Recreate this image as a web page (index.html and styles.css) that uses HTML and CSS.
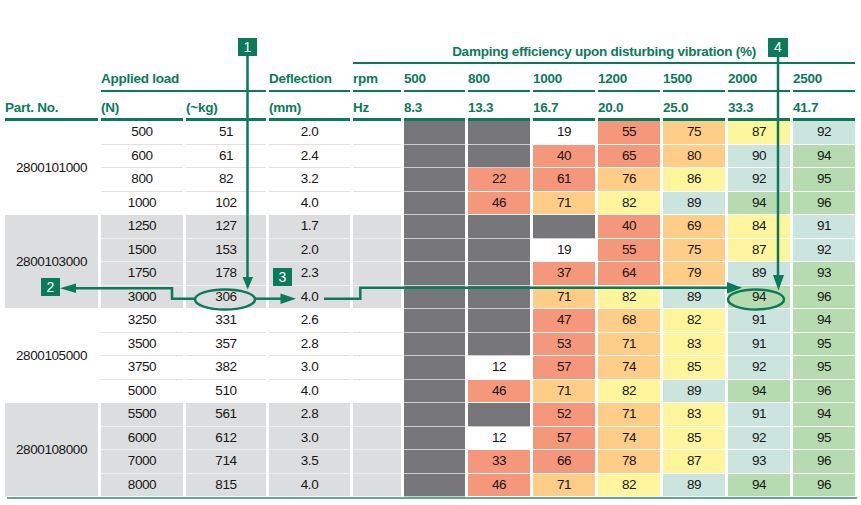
FILE: index.html
```html
<!DOCTYPE html>
<html lang="en">
<head>
<meta charset="utf-8">
<title>Damping efficiency</title>
<link rel="stylesheet" href="styles.css">
</head>
<body>
<div class="page">
  <table class="grid">
    <colgroup>
      <col class="c-part"><col class="c-n"><col class="c-kg"><col class="c-mm"><col class="c-rpm"><col class="c-500">
      <col class="c-f"><col class="c-f"><col class="c-f"><col class="c-f"><col class="c-f"><col class="c-f">
    </colgroup>
    <thead>
      <tr class="h1">
        <th colspan="4"></th>
        <th colspan="8" class="title">Damping efficiency upon disturbing vibration (%)</th>
      </tr>
      <tr class="h2">
        <th class="blank"></th>
        <th colspan="2" class="ul">Applied load</th>
        <th class="ul">Deflection</th>
        <th class="ul">rpm</th>
        <th class="ul">500</th>
        <th class="ul">800</th>
        <th class="ul">1000</th>
        <th class="ul">1200</th>
        <th class="ul">1500</th>
        <th class="ul">2000</th>
        <th class="ul">2500</th>
      </tr>
      <tr class="h3">
        <th>Part. No.</th>
        <th>(N)</th>
        <th>(~kg)</th>
        <th>(mm)</th>
        <th>Hz</th>
        <th>8.3</th>
        <th>13.3</th>
        <th>16.7</th>
        <th>20.0</th>
        <th>25.0</th>
        <th>33.3</th>
        <th>41.7</th>
      </tr>
    </thead>
    <tbody class="gw">
      <tr><td rowspan="4" class="l part">2800101000</td><td class="l">500</td><td class="l">51</td><td class="l">2.0</td><td class="l"></td><td class="d"></td><td class="d"></td><td class="w">19</td><td class="s">55</td><td class="p">75</td><td class="y">87</td><td class="t">92</td></tr>
      <tr><td class="l">600</td><td class="l">61</td><td class="l">2.4</td><td class="l"></td><td class="d"></td><td class="d"></td><td class="s">40</td><td class="s">65</td><td class="p">80</td><td class="t">90</td><td class="g">94</td></tr>
      <tr><td class="l">800</td><td class="l">82</td><td class="l">3.2</td><td class="l"></td><td class="d"></td><td class="s">22</td><td class="s">61</td><td class="p">76</td><td class="y">86</td><td class="t">92</td><td class="g">95</td></tr>
      <tr><td class="l">1000</td><td class="l">102</td><td class="l">4.0</td><td class="l"></td><td class="d"></td><td class="s">46</td><td class="p">71</td><td class="y">82</td><td class="t">89</td><td class="g">94</td><td class="g">96</td></tr>
    </tbody>
    <tbody class="gg">
      <tr><td rowspan="4" class="l part">2800103000</td><td class="l">1250</td><td class="l">127</td><td class="l">1.7</td><td class="l"></td><td class="d"></td><td class="d"></td><td class="d"></td><td class="s">40</td><td class="p">69</td><td class="y">84</td><td class="t">91</td></tr>
      <tr><td class="l">1500</td><td class="l">153</td><td class="l">2.0</td><td class="l"></td><td class="d"></td><td class="d"></td><td class="w">19</td><td class="s">55</td><td class="p">75</td><td class="y">87</td><td class="t">92</td></tr>
      <tr><td class="l">1750</td><td class="l">178</td><td class="l">2.3</td><td class="l"></td><td class="d"></td><td class="d"></td><td class="s">37</td><td class="s">64</td><td class="p">79</td><td class="t">89</td><td class="g">93</td></tr>
      <tr><td class="l">3000</td><td class="l">306</td><td class="l">4.0</td><td class="l"></td><td class="d"></td><td class="d"></td><td class="p">71</td><td class="y">82</td><td class="t">89</td><td class="g">94</td><td class="g">96</td></tr>
    </tbody>
    <tbody class="gw">
      <tr><td rowspan="4" class="l part">2800105000</td><td class="l">3250</td><td class="l">331</td><td class="l">2.6</td><td class="l"></td><td class="d"></td><td class="d"></td><td class="s">47</td><td class="p">68</td><td class="y">82</td><td class="t">91</td><td class="g">94</td></tr>
      <tr><td class="l">3500</td><td class="l">357</td><td class="l">2.8</td><td class="l"></td><td class="d"></td><td class="d"></td><td class="s">53</td><td class="p">71</td><td class="y">83</td><td class="t">91</td><td class="g">95</td></tr>
      <tr><td class="l">3750</td><td class="l">382</td><td class="l">3.0</td><td class="l"></td><td class="d"></td><td class="w">12</td><td class="s">57</td><td class="p">74</td><td class="y">85</td><td class="t">92</td><td class="g">95</td></tr>
      <tr><td class="l">5000</td><td class="l">510</td><td class="l">4.0</td><td class="l"></td><td class="d"></td><td class="s">46</td><td class="p">71</td><td class="y">82</td><td class="t">89</td><td class="g">94</td><td class="g">96</td></tr>
    </tbody>
    <tbody class="gg">
      <tr><td rowspan="4" class="l part">2800108000</td><td class="l">5500</td><td class="l">561</td><td class="l">2.8</td><td class="l"></td><td class="d"></td><td class="d"></td><td class="s">52</td><td class="p">71</td><td class="y">83</td><td class="t">91</td><td class="g">94</td></tr>
      <tr><td class="l">6000</td><td class="l">612</td><td class="l">3.0</td><td class="l"></td><td class="d"></td><td class="w">12</td><td class="s">57</td><td class="p">74</td><td class="y">85</td><td class="t">92</td><td class="g">95</td></tr>
      <tr><td class="l">7000</td><td class="l">714</td><td class="l">3.5</td><td class="l"></td><td class="d"></td><td class="s">33</td><td class="s">66</td><td class="p">78</td><td class="y">87</td><td class="t">93</td><td class="g">96</td></tr>
      <tr><td class="l">8000</td><td class="l">815</td><td class="l">4.0</td><td class="l"></td><td class="d"></td><td class="s">46</td><td class="p">71</td><td class="y">82</td><td class="t">89</td><td class="g">94</td><td class="g">96</td></tr>
    </tbody>
  </table>
  <div class="baseline"></div>

  <svg class="overlay" width="861" height="505" viewBox="0 0 861 505" aria-hidden="true">
    <g fill="none" stroke="#0a7a5b" stroke-width="2.5">
      <path d="M247.5 56 V279"/>
      <ellipse cx="225" cy="299.5" rx="30" ry="10"/>
      <path d="M195 298.7 H172 V288.2 H74"/>
      <path d="M255 298.7 H283"/>
      <path d="M324 298.7 H360.3 V287.8 H729"/>
      <ellipse cx="756" cy="299.5" rx="28" ry="10"/>
      <path d="M778 57 V277"/>
    </g>
    <g fill="#0a7a5b">
      <polygon points="242.5,277 253,277 247.7,289.5"/>
      <polygon points="60,288.2 76,283.5 76,293"/>
      <polygon points="296,298.7 280.5,293.5 280.5,304"/>
      <polygon points="742,287.8 727,282 727,293.5"/>
      <polygon points="773,275 784,275 778.5,290.5"/>
    </g>
  </svg>
  <div class="badge b1">1</div>
  <div class="badge b2">2</div>
  <div class="badge b3">3</div>
  <div class="badge b4">4</div>
</div>
</body>
</html>
```

FILE: styles.css
```css
* { box-sizing: border-box; }

html, body {
  margin: 0;
  padding: 0;
  background: #ffffff;
}

body {
  font-family: "Liberation Sans", Arial, sans-serif;
  color: #161616;
}

.page {
  position: relative;
  width: 861px;
  height: 505px;
  padding: 36px 0 0 2px;
  overflow: hidden;
}

.grid {
  border-collapse: separate;
  border-spacing: 3px 0;
  table-layout: fixed;
  width: 856px;
}

.c-part { width: 93px; }
.c-n { width: 82px; }
.c-kg { width: 80px; }
.c-mm { width: 81px; }
.c-rpm { width: 48px; }
.c-500 { width: 61px; }
.c-f { width: 62px; }

th {
  padding: 0;
  font-weight: bold;
  font-size: 13.5px;
  letter-spacing: -0.25px;
  line-height: 16px;
  color: #0a7a5b;
  text-align: left;
  vertical-align: bottom;
  white-space: nowrap;
}

.h1 th { height: 28px; }
.h1 .title {
  text-align: center;
  border-bottom: 2px solid #0a7a5b;
  padding-bottom: 2px;
}

.h2 th { height: 28px; padding-bottom: 3px; }
.h2 .ul { border-bottom: 2px solid #0a7a5b; }
.h2 .blank { border-bottom: 0; }

.h3 th {
  height: 29px;
  padding-bottom: 2px;
  border-bottom: 3px solid #0a7a5b;
}

tbody tr { height: 23.5px; }

td {
  padding: 0;
  font-size: 13.5px;
  letter-spacing: -0.4px;
  line-height: 20px;
  text-align: center;
  vertical-align: middle;
  border-bottom: 1px solid #ffffff;
  white-space: nowrap;
}

.gw .l { background: #ffffff; border-bottom-color: #e2e2e3; }
.gg .l { background: #dcdddf; border-bottom-color: #eeeeef; }
.gw tr:last-child .l,
.gg tr:last-child .l,
.l.part { border-bottom-color: #ffffff; }

.d { background: #77777b; border-bottom-color: #cfcfd0; }
.w { background: #ffffff; }
.s { background: #f5977b; }
.p { background: #fecd87; }
.y { background: #fff59c; }
.t { background: #cbe4dd; }
.g { background: #b6dbb1; }

.baseline {
  margin-left: 5px;
  width: 850px;
  height: 2px;
  background: #5fa892;
}

.overlay {
  position: absolute;
  left: 0;
  top: 0;
  pointer-events: none;
}

.badge {
  position: absolute;
  width: 19px;
  height: 18px;
  background: #0a7a5b;
  color: #ffffff;
  font-size: 14px;
  line-height: 18px;
  text-align: center;
}

.b1 { left: 238px; top: 38px; }
.b2 { left: 41px; top: 278px; }
.b3 { left: 273px; top: 268px; }
.b4 { left: 768px; top: 38px; width: 20px; height: 19px; line-height: 19px; }
```
